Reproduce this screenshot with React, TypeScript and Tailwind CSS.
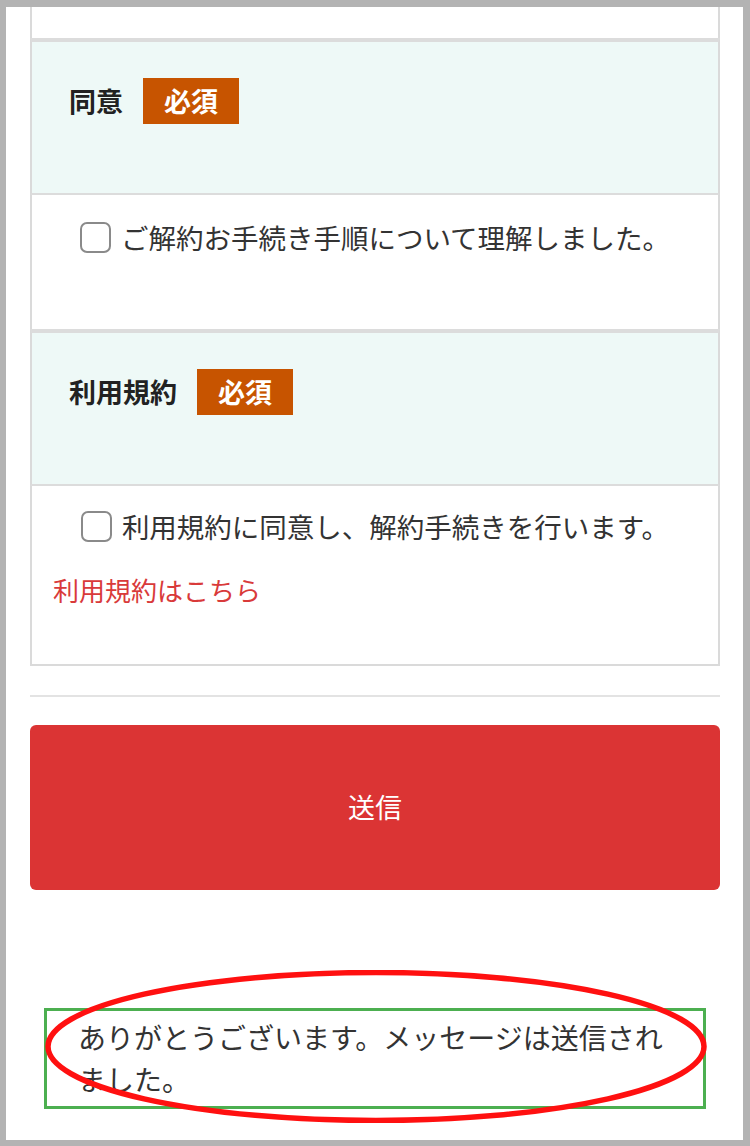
export default function App() {
  const font = { fontFamily: '"Noto Sans CJK JP", "Noto Sans", sans-serif' }

  const Header = ({ label }: { label: string }) => (
    <div className="h-[157px] border-x-2 border-x-[#dadada] border-t-4 border-t-[#dcdcdc] border-b-2 border-b-[#dcdcdc] bg-[#eef9f7] pl-[37px] pt-[36px]">
      <div className="flex items-center gap-[20px]">
        <span className="text-[27px] font-bold text-[#222] leading-[46px]">{label}</span>
        <span className="h-[46px] px-[21px] bg-[#c75400] text-white text-[27px] font-bold leading-[46px]">必須</span>
      </div>
    </div>
  )

  const CheckRow = ({ text }: { text: string }) => (
    <label className="flex items-center justify-center gap-[10px]">
      <input
        type="checkbox"
        className="appearance-none w-[31px] h-[31px] rounded-[7px] border-[2.5px] border-[#8a8a8a] bg-white shrink-0"
      />
      <span className="text-[27.5px] leading-[31px] text-[#333]">{text}</span>
    </label>
  )

  return (
    <div style={font} className="h-[1146px] bg-[#b3b3b3] pt-[7px] pb-[6px] pl-[6px] pr-[7px]">
      <div className="h-full bg-white relative overflow-hidden flex flex-col">
        <div className="ml-[24px] mr-[23px]">
          {/* card */}
          <div className="h-[31px] border-x-2 border-x-[#dadada]" />
          <Header label="同意" />
          <div className="h-[134px] border-x-2 border-x-[#dadada] pt-[27px]">
            <CheckRow text="ご解約お手続き手順について理解しました。" />
          </div>
          <Header label="利用規約" />
          <div className="h-[180px] border-x-2 border-x-[#dadada] border-b-2 border-b-[#dadada] pt-[25px]">
            <CheckRow text="利用規約に同意し、解約手続きを行います。" />
            <a className="block mt-[32px] pl-[21px] text-[26px] leading-[32px] text-[#d93a3a]">利用規約はこちら</a>
          </div>

          <div className="mt-[29px] h-[2px] bg-[#e3e3e3]" />

          <button className="mt-[28px] w-full h-[165px] rounded-[6px] bg-[#db3434] text-white text-[27px]">
            送信
          </button>
        </div>

        <div className="mt-[118px] ml-[38px] mr-[37px] border-[3px] border-[#4caf50] pl-[31px] pr-[31px] pt-[5px] pb-[6px]">
          <p className="text-[28px] leading-[42px] text-[#333]">
            ありがとうございます。メッセージは送信されました。
          </p>
        </div>

        {/* annotation */}
        <svg className="absolute left-[39px] top-[963px] w-[662px] h-[153px]" viewBox="0 0 662 153">
          <ellipse cx="331" cy="76.5" rx="328" ry="74" fill="none" stroke="#ff1010" strokeWidth="5.5" />
        </svg>
      </div>
    </div>
  )
}
